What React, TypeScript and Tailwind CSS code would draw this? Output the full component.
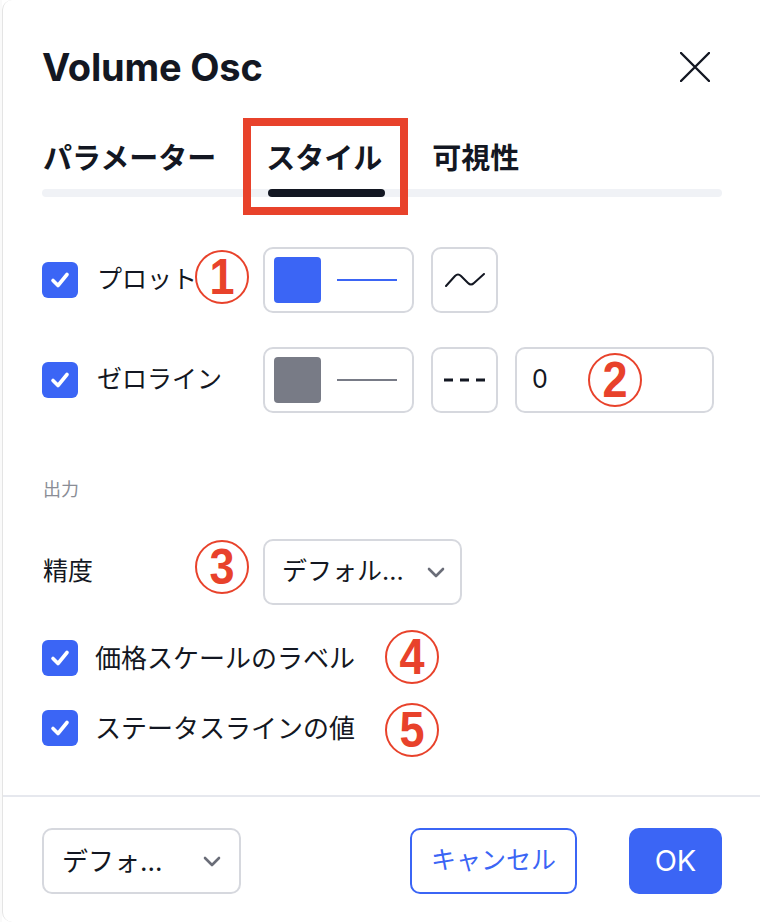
import React from "react";

const FONT = { fontFamily: 'Inter, "Noto Sans CJK JP", sans-serif' };

function Check() {
  return (
    <div className="w-[36px] h-[36px] rounded-[6px] bg-[#3b65f5] flex items-center justify-center shrink-0">
      <svg width="36" height="36" viewBox="0 0 36 36" fill="none">
        <path d="M11 18.5 L16 23.5 L25 12.5" stroke="white" strokeWidth="3.6" strokeLinecap="round" strokeLinejoin="round" />
      </svg>
    </div>
  );
}

function Circ({ n, className }: { n: string; className: string }) {
  return (
    <div
      className={
        "absolute w-[54px] h-[54px] rounded-full border-2 border-[#e8422b] flex items-center justify-center text-[#e8422b] text-[50px] font-bold leading-none " +
        className
      }
      style={{ fontFamily: '"Liberation Sans", Inter, sans-serif' }}
    >
      <span className="-mt-[1px] inline-block scale-x-[0.9]">{n}</span>
    </div>
  );
}

function Chevron() {
  return (
    <svg width="18" height="11" viewBox="0 0 18 11" fill="none">
      <path d="M2 2 L9 9 L16 2" stroke="#6a6d78" strokeWidth="2.6" strokeLinecap="round" strokeLinejoin="round" />
    </svg>
  );
}

function Swatch({ color }: { color: string }) {
  return (
    <div className="w-[151px] h-[66px] rounded-[10px] border-2 border-[#d6d8de] flex items-center pl-[9px] shrink-0">
      <div className="w-[47px] h-[46px] rounded-[4px]" style={{ background: color }} />
      <div className="ml-[16px] w-[60px] h-[2px]" style={{ background: color }} />
    </div>
  );
}

export default function App() {
  return (
    <div className="relative w-[760px] h-[922px] bg-white flex text-[#131722]" style={FONT}>
      <div className="w-[2px] bg-[#fafafa]" />
      <div className="flex-1 flex flex-col border-l border-[#e4e4e4] rounded-l-[10px] pl-[39px] pr-[38px]">
        {/* header */}
        <div className="pt-[44px] h-[90px] flex items-end justify-between">
          <div className="h-[46px] leading-[46px] text-[38px] font-bold tracking-[-0.2px]">Volume Osc</div>
          <div className="h-[46px] flex items-center mr-[12px]">
            <svg width="30" height="30" viewBox="0 0 30 30" fill="none">
              <path d="M1 1 L29 29 M29 1 L1 29" stroke="#131722" strokeWidth="2.4" strokeLinecap="round" />
            </svg>
          </div>
        </div>

        {/* tabs */}
        <div className="mt-[50px] h-[38px] flex gap-[50px] text-[29px] font-semibold leading-[38px] pl-[1px]">
          <div>パラメーター</div>
          <div>スタイル</div>
          <div>可視性</div>
        </div>
        <div className="mt-[11px] h-[8px] rounded-full bg-[#f0f2f6] flex">
          <div className="ml-[226px] w-[117px] h-[8px] rounded-full bg-[#131722]" />
        </div>

        {/* row 1 */}
        <div className="mt-[50px] h-[66px] flex items-center">
          <div className="relative w-[221px] h-[66px] flex items-center shrink-0">
            <Check />
            <span className="ml-[19px] text-[25px]">プロット</span>
            <Circ n="1" className="left-[153px] top-[3px]" />
          </div>
          <Swatch color="#3b65f5" />
          <div className="ml-[17px] w-[67px] h-[66px] rounded-[10px] border-2 border-[#d6d8de] flex items-center justify-center">
            <svg width="40" height="14" viewBox="0 0 40 14" fill="none">
              <path d="M1 13 L10 3 Q13 0 16 3 L23 10 Q26 13 29 10 L39 1" stroke="#131722" strokeWidth="2" strokeLinecap="round" strokeLinejoin="round" />
            </svg>
          </div>
        </div>

        {/* row 2 */}
        <div className="mt-[34px] h-[66px] flex items-center">
          <div className="w-[221px] h-[66px] flex items-center shrink-0">
            <Check />
            <span className="ml-[19px] text-[25px]">ゼロライン</span>
          </div>
          <Swatch color="#787b86" />
          <div className="ml-[17px] w-[67px] h-[66px] rounded-[10px] border-2 border-[#d6d8de] flex items-center justify-center">
            <svg width="44" height="4" viewBox="0 0 44 4" fill="none">
              <path d="M1 2 H10 M17 2 H26 M33 2 H42" stroke="#131722" strokeWidth="3" />
            </svg>
          </div>
          <div className="relative ml-[17px] w-[199px] h-[66px] rounded-[10px] border-2 border-[#d6d8de] flex items-center pl-[15px] text-[25px]">
            0
            <Circ n="2" className="left-[71px] top-[4px]" />
          </div>
        </div>

        {/* output */}
        <div className="mt-[65px] h-[24px] leading-[24px] text-[18px] text-[#8a8d96] pl-[1px]">出力</div>

        {/* precision */}
        <div className="mt-[37px] h-[66px] flex items-center">
          <div className="relative w-[221px] h-[66px] flex items-center shrink-0">
            <span className="text-[25px] pl-[1px]">精度</span>
            <Circ n="3" className="left-[153px] top-[1px]" />
          </div>
          <div className="w-[199px] h-[66px] rounded-[10px] border-2 border-[#d6d8de] flex items-center justify-between pl-[17px] pr-[15px]">
            <span className="text-[25px]">デフォル...</span>
            <Chevron />
          </div>
        </div>

        {/* row 4 */}
        <div className="relative mt-[35px] h-[36px] flex items-center">
          <Check />
          <span className="ml-[17px] text-[26px]">価格スケールのラベル</span>
          <Circ n="4" className="left-[343px] -top-[10px]" />
        </div>

        {/* row 5 */}
        <div className="relative mt-[34px] h-[36px] flex items-center">
          <Check />
          <span className="ml-[17px] text-[26px]">ステータスラインの値</span>
          <Circ n="5" className="left-[343px] -top-[7px]" />
        </div>

        <div className="flex-1" />
        <div className="-ml-[39px] -mr-[38px] h-[2px] bg-[#e6e8ee]" />

        {/* footer */}
        <div className="pt-[31px] pb-[28px] flex items-center">
          <div className="w-[199px] h-[66px] rounded-[10px] border-2 border-[#d6d8de] flex items-center justify-between pl-[18px] pr-[18px]">
            <span className="text-[26px]">デフォ...</span>
            <Chevron />
          </div>
          <div className="flex-1" />
          <div className="w-[167px] h-[66px] rounded-[10px] border-2 border-[#3b65f5] flex items-center justify-center text-[25px] text-[#3b65f5]">
            キャンセル
          </div>
          <div className="ml-[52px] w-[93px] h-[66px] rounded-[10px] bg-[#3b65f5] flex items-center justify-center text-[29px] text-white">
            OK
          </div>
        </div>
      </div>

      {/* annotation box */}
      <div className="absolute left-[243px] top-[118px] w-[165px] h-[97px] border-[8px] border-[#e8422b]" />
    </div>
  );
}
